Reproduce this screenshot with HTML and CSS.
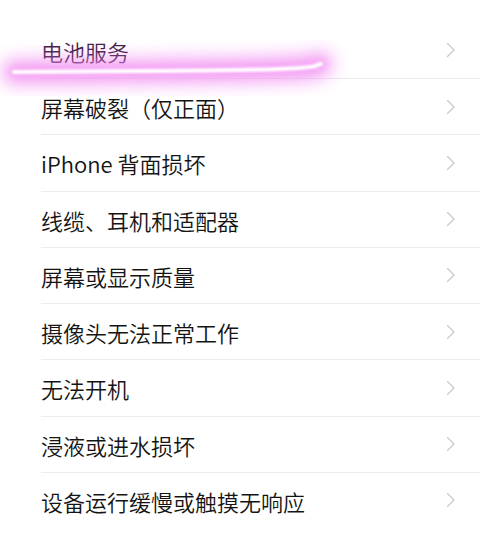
FILE: index.html
```html
<!DOCTYPE html>
<html lang="zh-CN">
<head>
<meta charset="utf-8">
<link rel="stylesheet" href="styles.css">
</head>
<body>
<ul class="list">
  <li class="row row-first"><span class="label">电池服务</span><svg class="chev" viewBox="0 0 10 16"><path d="M1.5 1.5 L8 8 L1.5 14.5"/></svg></li>
  <li class="row"><span class="label">屏幕破裂（仅正面）</span><svg class="chev" viewBox="0 0 10 16"><path d="M1.5 1.5 L8 8 L1.5 14.5"/></svg></li>
  <li class="row"><span class="label">iPhone 背面损坏</span><svg class="chev" viewBox="0 0 10 16"><path d="M1.5 1.5 L8 8 L1.5 14.5"/></svg></li>
  <li class="row"><span class="label">线缆、耳机和适配器</span><svg class="chev" viewBox="0 0 10 16"><path d="M1.5 1.5 L8 8 L1.5 14.5"/></svg></li>
  <li class="row"><span class="label">屏幕或显示质量</span><svg class="chev" viewBox="0 0 10 16"><path d="M1.5 1.5 L8 8 L1.5 14.5"/></svg></li>
  <li class="row"><span class="label">摄像头无法正常工作</span><svg class="chev" viewBox="0 0 10 16"><path d="M1.5 1.5 L8 8 L1.5 14.5"/></svg></li>
  <li class="row"><span class="label">无法开机</span><svg class="chev" viewBox="0 0 10 16"><path d="M1.5 1.5 L8 8 L1.5 14.5"/></svg></li>
  <li class="row"><span class="label">浸液或进水损坏</span><svg class="chev" viewBox="0 0 10 16"><path d="M1.5 1.5 L8 8 L1.5 14.5"/></svg></li>
  <li class="row row-last"><span class="label">设备运行缓慢或触摸无响应</span><svg class="chev" viewBox="0 0 10 16"><path d="M1.5 1.5 L8 8 L1.5 14.5"/></svg></li>
</ul>
<svg class="highlight" viewBox="0 0 500 549" width="500" height="549">
  <defs>
    <filter id="glow" x="-20%" y="-300%" width="140%" height="700%">
      <feGaussianBlur stdDeviation="9"/>
    </filter>
    <filter id="glow2" x="-20%" y="-300%" width="140%" height="700%">
      <feGaussianBlur stdDeviation="4"/>
    </filter>
    <filter id="soft" x="-5%" y="-100%" width="110%" height="300%">
      <feGaussianBlur stdDeviation="0.8"/>
    </filter>
  </defs>
  <path class="hl-glow" d="M14 72 C 100 71.5, 230 71, 280 69 S 312 64.5, 321 64" filter="url(#glow)"/>
  <path class="hl-glow2" d="M14 72 C 100 71.5, 230 71, 280 69 S 312 64.5, 321 64" filter="url(#glow2)"/>
  <path class="hl-core" d="M14 72 C 100 71.5, 230 71, 280 69 S 312 64.5, 321 64" filter="url(#soft)"/>
</svg>
</body>
</html>
```
FILE: styles.css
```css
html, body {
  margin: 0;
  padding: 0;
  background: #ffffff;
}
body {
  width: 500px;
  height: 549px;
  overflow: hidden;
  position: relative;
  font-family: "Noto Sans CJK SC", "Noto Sans", sans-serif;
}
.list {
  list-style: none;
  margin: 22.75px 0 0 0;
  padding: 0 20px 0 41px;
}
.row {
  height: 55.25px;
  border-bottom: 1px solid #ececec;
  display: flex;
  align-items: center;
  justify-content: space-between;
}
.row-last {
  border-bottom: none;
}
.label {
  font-size: 22px;
  font-weight: 350;
  line-height: 1;
  color: #141414;
  padding-top: 1px;
  letter-spacing: 0;
}
.row-first .label {
  color: #3e1d45;
}
.chev {
  width: 10px;
  height: 16px;
  margin-right: 24px;
  fill: none;
  stroke: #cacace;
  stroke-width: 1.4;
  stroke-linecap: round;
  stroke-linejoin: round;
}
.highlight {
  position: absolute;
  left: 0;
  top: 0;
  pointer-events: none;
}
.hl-glow {
  fill: none;
  stroke: #f078f0;
  stroke-width: 24;
  stroke-linecap: round;
  opacity: 0.7;
}
.hl-glow2 {
  fill: none;
  stroke: #f5a6f5;
  stroke-width: 9;
  stroke-linecap: round;
}
.hl-core {
  fill: none;
  stroke: #ffffff;
  stroke-width: 4;
  stroke-linecap: round;
}
```
